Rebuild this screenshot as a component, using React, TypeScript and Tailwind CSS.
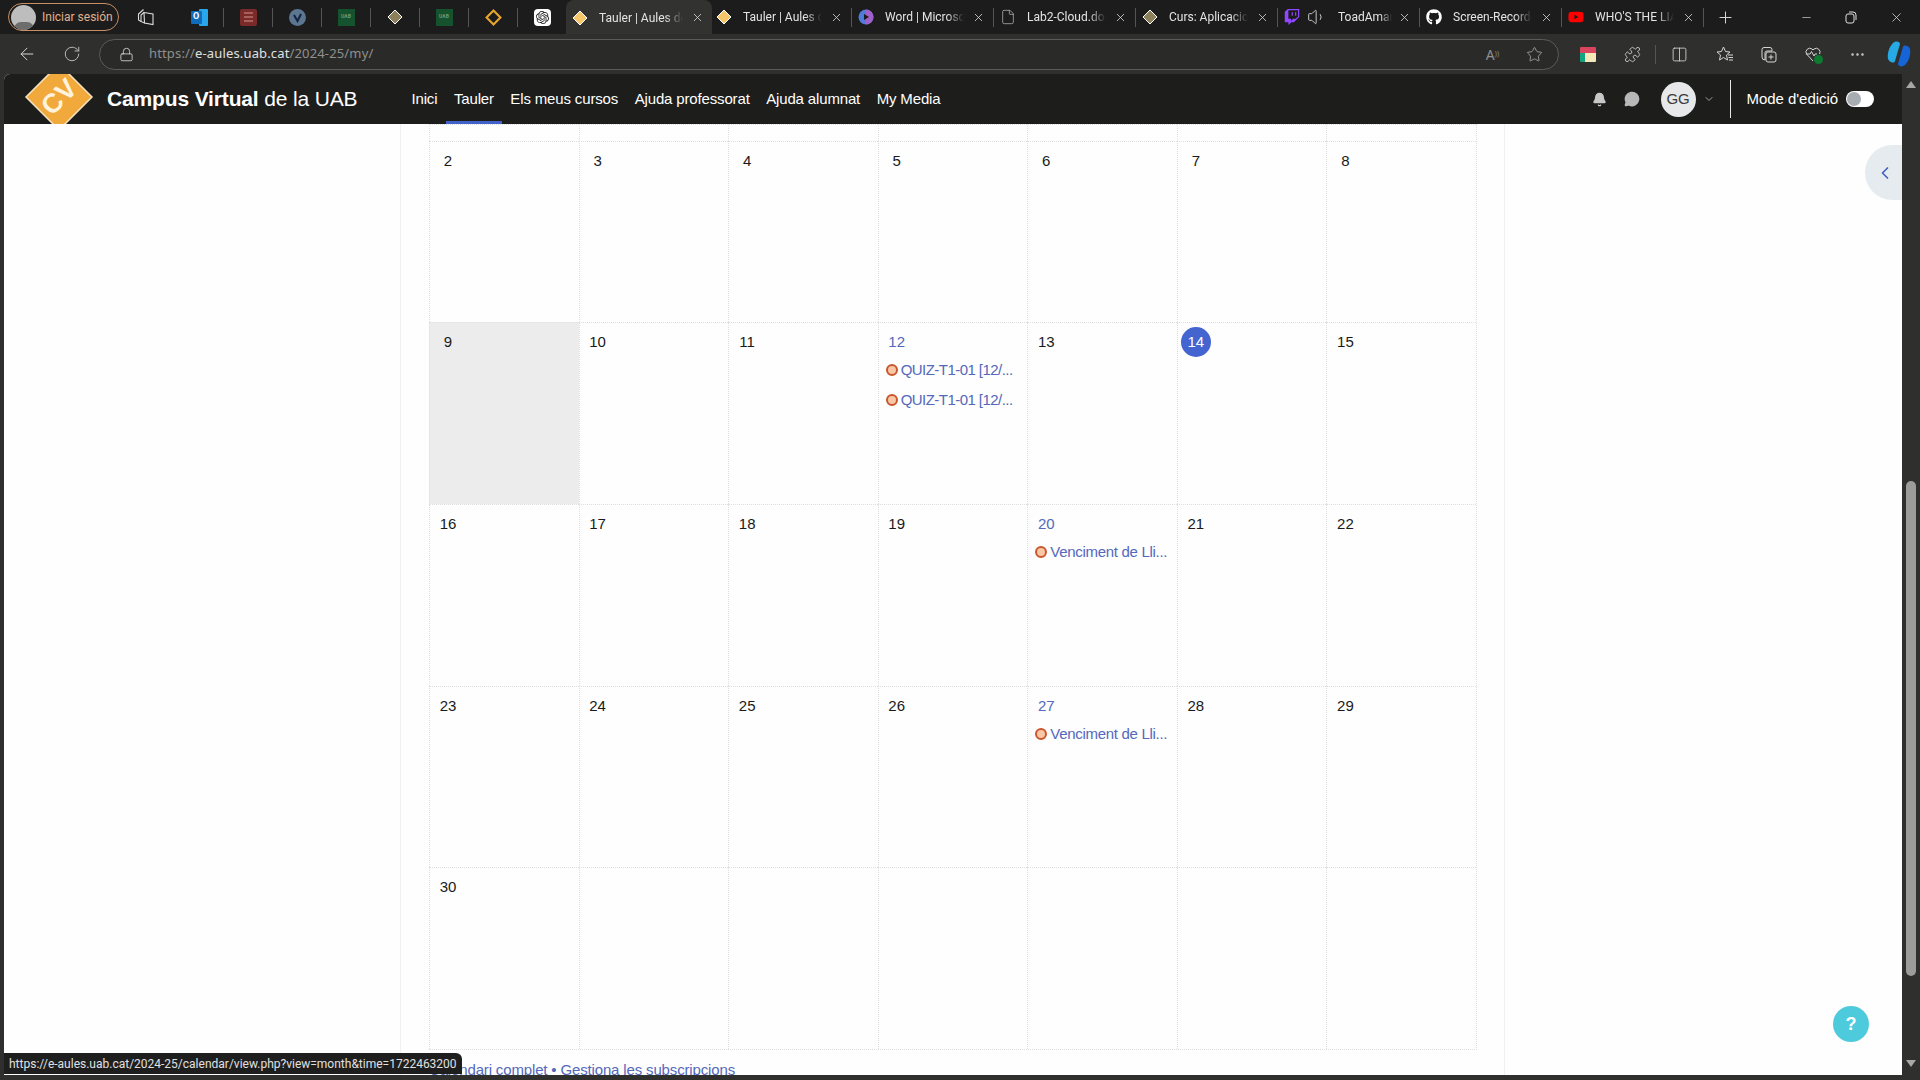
import type { ReactNode } from 'react'
import {
  ArrowLeft,
  Bell,
  ChevronDown,
  ChevronLeft,
  Columns2,
  File,
  Lock,
  MessageCircle,
  Minus,
  MoreHorizontal,
  Plus,
  Puzzle,
  RotateCw,
  Star,
  Volume1,
  X,
} from 'lucide-react'
import { FaGithub, FaTwitch, FaYoutube } from 'react-icons/fa'
import { SiOpenai } from 'react-icons/si'

const Diamond = ({ color = '#f5c76a', size = 16 }: { color?: string; size?: number }) => (
  <svg width={size} height={size} viewBox="0 0 16 16" className="shrink-0">
    <path d="M8 1 15 8 8 15 1 8Z" fill={color} stroke="#fff" strokeWidth="1" />
  </svg>
)

const UabIcon = () => (
  <div className="flex h-[17px] w-[17px] items-center justify-center bg-[#14532d] text-[5px] font-bold text-[#6b9a7c]">
    UAB
  </div>
)

const pinned: ReactNode[] = [
  <div key="outlook" className="flex h-[17px] w-[17px] items-center">
    <div className="z-10 flex h-[13px] w-[11px] items-center justify-center rounded-[1px] bg-[#0f6cbd] text-[9px] font-bold text-white">
      O
    </div>
    <div className="-ml-[3px] h-[17px] w-[9px] rounded-[1px] bg-[#28a8ea]" />
  </div>,
  <div key="todo" className="flex h-[17px] w-[17px] flex-col justify-center gap-[2px] rounded-[2px] bg-[#7a2a28] px-[4px]">
    <div className="h-[2px] bg-[#a8605c]" />
    <div className="h-[2px] bg-[#a8605c]" />
    <div className="h-[2px] bg-[#a8605c]" />
  </div>,
  <div key="check" className="flex h-[17px] w-[17px] items-center justify-center rounded-full bg-[#5c7590]">
    <svg width="11" height="11" viewBox="0 0 11 11">
      <path d="M2 3 5.5 9 9 2" fill="none" stroke="#12233f" strokeWidth="2" />
    </svg>
  </div>,
  <UabIcon key="uab1" />,
  <Diamond key="d1" color="#8c7f5c" />,
  <UabIcon key="uab2" />,
  <svg key="d2" width="17" height="17" viewBox="0 0 16 16">
    <path d="M8 1.5 14.5 8 8 14.5 1.5 8Z" fill="none" stroke="#e6a52e" strokeWidth="2" />
  </svg>,
  <div key="gpt" className="flex h-[17px] w-[17px] items-center justify-center rounded-[4px] bg-white">
    <SiOpenai className="h-[13px] w-[13px] text-[#222]" />
  </div>,
]

const BingIcon = () => (
  <svg width="16" height="18" viewBox="0 0 16 18" className="shrink-0">
    <circle cx="8" cy="9" r="7.5" fill="#4f7bd9" />
    <path d="M8 1.5a7.5 7.5 0 0 1 0 15Z" fill="#a05fc9" />
    <path d="M6 6l5 3-5 3Z" fill="#1b1c1b" />
  </svg>
)

type TabItem = {
  title: string
  icon: ReactNode
  box: string
  iconBox: string
  closeBox: string
  extra?: ReactNode
}

const tabs: TabItem[] = [
  { title: 'Tauler | Aules de', icon: <Diamond />, box: 'w-[146px] rounded-t-lg bg-[#323331]', iconBox: 'ml-[6px]', closeBox: 'ml-[8px]' },
  { title: 'Tauler | Aules de', icon: <Diamond />, box: 'w-[140px] border-r border-[#555]', iconBox: 'ml-[4px]', closeBox: 'ml-[8px]' },
  { title: 'Word | Microsoft', icon: <BingIcon />, box: 'w-[142px] border-r border-[#555]', iconBox: 'ml-[6px]', closeBox: 'ml-[8px]' },
  { title: 'Lab2-Cloud.docx', icon: <File className="h-4 w-4 text-[#c8c8c8]" strokeWidth={1} />, box: 'w-[142px] border-r border-[#555]', iconBox: 'ml-[6px]', closeBox: 'ml-[8px]' },
  { title: 'Curs: Aplicacions', icon: <Diamond color="#8c7f5c" />, box: 'w-[142px] border-r border-[#555]', iconBox: 'ml-[6px]', closeBox: 'ml-[8px]' },
  {
    title: 'ToadAman',
    icon: <FaTwitch className="h-4 w-4 text-[#9146ff]" />,
    box: 'w-[142px] border-r border-[#555]',
    iconBox: 'ml-[6px]',
    closeBox: 'ml-[6px]',
    extra: <Volume1 className="ml-[7px] h-[20px] w-[20px] shrink-0 text-[#d8d8d8]" strokeWidth={1.1} />,
  },
  { title: 'Screen-Recorder', icon: <FaGithub className="h-4 w-4 text-white" />, box: 'w-[142px] border-r border-[#555]', iconBox: 'ml-[6px]', closeBox: 'ml-[8px]' },
  { title: "WHO'S THE LIAR", icon: <FaYoutube className="h-4 w-4 text-[#f00]" />, box: 'w-[142px] border-r border-[#555]', iconBox: 'ml-[6px]', closeBox: 'ml-[8px]' },
]

const navItems = ['Inici', 'Tauler', 'Els meus cursos', 'Ajuda professorat', 'Ajuda alumnat', 'My Media']

type Event = { label: string; fit: string }
type Day = { n?: number; link?: boolean; today?: boolean; shaded?: boolean; events?: Event[] }

const quiz = { label: 'QUIZ-T1-01 [12/...', fit: 'tracking-[-0.55px]' }
const venc = { label: 'Venciment de Lli...', fit: 'tracking-[-0.3px]' }

const weeks: Day[][] = [
  [{}, {}, {}, {}, {}, {}, {}],
  [{ n: 2 }, { n: 3 }, { n: 4 }, { n: 5 }, { n: 6 }, { n: 7 }, { n: 8 }],
  [{ n: 9, shaded: true }, { n: 10 }, { n: 11 }, { n: 12, link: true, events: [quiz, quiz] }, { n: 13 }, { n: 14, today: true }, { n: 15 }],
  [{ n: 16 }, { n: 17 }, { n: 18 }, { n: 19 }, { n: 20, link: true, events: [venc] }, { n: 21 }, { n: 22 }],
  [{ n: 23 }, { n: 24 }, { n: 25 }, { n: 26 }, { n: 27, link: true, events: [venc] }, { n: 28 }, { n: 29 }],
  [{ n: 30 }, {}, {}, {}, {}, {}, {}],
]

const DayCell = ({ day }: { day: Day }) => (
  <div className={`border-t border-l border-dotted border-[#dde0e2] pl-[3px] pt-[4px] ${day.shaded ? 'bg-[#ebeceb]' : ''}`}>
    {day.n !== undefined && (
      <div
        className={`flex h-[30px] w-[30px] items-center justify-center rounded-full text-[15px] ${
          day.today ? 'bg-[#4464cf] text-white' : day.link ? 'text-[#5468bc]' : 'text-[#1a1a1a]'
        }`}
      >
        {day.n}
      </div>
    )}
    {day.events && (
      <div className="mt-[2px] flex flex-col gap-[8px]">
        {day.events.map((ev, i) => (
          <div key={i} className={`flex h-[22px] items-center whitespace-nowrap text-[15px] text-[#5468bc] ${ev.fit}`}>
            <span className="mr-[3px] ml-[4px] h-[12px] w-[12px] shrink-0 rounded-full border-2 border-[#c9562c] bg-[#f9c6a6]" />
            {ev.label}
          </div>
        ))}
      </div>
    )}
  </div>
)

const App = () => {
  return (
    <div className="relative flex h-[1080px] w-[1920px] flex-col overflow-hidden bg-[#2f302e] font-['Liberation_Sans',Arial,sans-serif]">
      {/* tab strip */}
      <div className="flex h-[34px] shrink-0 items-center bg-[#1b1c1b] font-['Roboto',sans-serif] text-[12px] text-[#e4e4e4]">
        <div className="ml-[8px] flex h-[28px] w-[111px] items-center rounded-full border border-[#c98f64] pl-[2px]">
          <div className="flex h-[25px] w-[25px] items-end justify-center overflow-hidden rounded-full bg-[#bdbdbd]">
            <div className="mb-[-6px] h-[14px] w-[20px] rounded-full bg-[#6d6d6d]" />
          </div>
          <span className="ml-[6px] text-[12px] text-[#e0b08e]">Iniciar sesión</span>
        </div>
        <div className="ml-[16px] flex w-[22px] items-center justify-center">
          <svg width="22" height="22" viewBox="0 0 22 22" fill="none" stroke="#dcdcdc" strokeWidth="1.1">
            <path d="M9 6.5 18 8v10.5L9.5 17Z" />
            <path d="M9 6.5 6 9v6.5l3.5 1.5" />
            <path d="M8.5 3.5 3.5 8v6l2.5 1.5" />
          </svg>
        </div>
        <div className="ml-[18px] flex">
          {pinned.map((icon, i) => (
            <div
              key={i}
              className={`flex h-[19px] w-[49px] items-center justify-center ${i < pinned.length - 1 ? 'border-r border-[#555]' : ''}`}
            >
              {icon}
            </div>
          ))}
        </div>
        <div className="ml-[-1px] flex h-[34px] items-center">
          {tabs.map((t) => (
            <div key={t.title + t.box} className={`flex items-center ${t.box === tabs[0].box ? 'h-[34px] pt-[1px]' : 'h-[19px]'} ${t.box}`}>
              <div className={`flex w-[16px] shrink-0 items-center justify-center ${t.iconBox}`}>{t.icon}</div>
              {t.extra}
              <div className="ml-[11px] min-w-0 flex-1 overflow-hidden whitespace-nowrap [mask-image:linear-gradient(to_right,black_78%,transparent)]">
                {t.title}
              </div>
              <X className={`mr-[8px] h-[13px] w-[13px] shrink-0 text-[#d8d8d8] ${t.closeBox}`} strokeWidth={1.5} />
            </div>
          ))}
        </div>
        <Plus className="ml-[12px] h-[19px] w-[19px] text-[#e0e0e0]" strokeWidth={1.2} />
        <Minus className="ml-[65px] h-[13px] w-[13px] text-[#e0e0e0]" strokeWidth={1.2} />
        <svg width="12" height="13" viewBox="0 0 12 13" fill="none" stroke="#e0e0e0" className="ml-[32px]">
          <rect x="1" y="3" width="8" height="9" rx="2" />
          <path d="M4 1h4a3 3 0 0 1 3 3v5" />
        </svg>
        <X className="ml-[32px] h-[15px] w-[15px] text-[#e0e0e0]" strokeWidth={1.2} />
      </div>

      {/* address bar row */}
      <div className="flex h-[40px] shrink-0 items-center text-[#d4d4d4]">
        <ArrowLeft className="ml-[17px] h-[20px] w-[20px]" strokeWidth={1.2} />
        <RotateCw className="ml-[26px] h-[18px] w-[18px] text-[#c4c4c4]" strokeWidth={1.2} />
        <div className="ml-[18px] flex h-[31px] w-[1460px] items-center rounded-full border border-[#5b5b5b] bg-[#2a2b29]">
          <Lock className="ml-[19px] h-[15px] w-[15px] text-[#dcdcdc]" strokeWidth={1.3} />
          <div className="ml-[15px] flex-1 font-['Noto_Sans',sans-serif] text-[13px] tracking-[0.15px] text-[#8f8f8f]">
            https://<span className="text-[#e0e0e0]">e-aules.uab.cat</span>/2024-25/my/
          </div>
          <span className="mr-[27px] font-['Noto_Sans',sans-serif] text-[14px] text-[#8f8f8f]">
            A<sup className="text-[7px]">))</sup>
          </span>
          <Star className="mr-[15px] h-[17px] w-[17px] text-[#a8a8a8]" strokeWidth={1.2} />
        </div>
        <div className="ml-[21px] flex h-[15px] w-[16px] flex-col overflow-hidden rounded-[1px]">
          <div className="h-[6px] bg-[#d9455f]" />
          <div className="flex flex-1">
            <div className="w-[5px] bg-[#14a37f]" />
            <div className="flex-1 bg-[#f4e7b8]" />
          </div>
        </div>
        <Puzzle className="ml-[28px] h-[17px] w-[17px]" strokeWidth={1.2} />
        <div className="ml-[14px] h-[19px] w-px bg-[#555]" />
        <Columns2 className="ml-[15px] h-[17px] w-[17px]" strokeWidth={1.2} />
        <svg width="18" height="18" viewBox="0 0 18 18" fill="none" stroke="#d4d4d4" className="ml-[28px]">
          <path d="M7.5 2 9.5 6.5 14 7 10.5 10 11.5 15 7.5 12.5 3.5 15 4.5 10 1 7 5.5 6.5Z" />
          <path d="M12 10h5M12.5 12.5h4.5M13 15h4" />
        </svg>
        <svg width="18" height="18" viewBox="0 0 18 18" fill="none" stroke="#d4d4d4" className="ml-[26px]">
          <path d="M4 2.5h6a2 2 0 0 1 2 2V6H7a2 2 0 0 0-2 2v7a3 3 0 0 1-3-3V4.5a2 2 0 0 1 2-2Z" />
          <rect x="6" y="7" width="10" height="10" rx="2" />
          <path d="M11 9.5v5M8.5 12h5" />
        </svg>
        <div className="relative ml-[26px] h-[18px] w-[18px]">
          <svg width="18" height="18" viewBox="0 0 18 18" fill="none" stroke="#d4d4d4">
            <path d="M9 16 2.5 9a3.8 3.8 0 0 1 5.5-5L9 5l1-1a3.8 3.8 0 0 1 5.5 5" />
            <path d="M2 9h4l1.5-2.5L10 11l1-2h2" />
          </svg>
          <span className="absolute right-[-1px] bottom-[-1px] h-[9px] w-[9px] rounded-full bg-[#0e7a2f]" />
        </div>
        <MoreHorizontal className="ml-[27px] h-[17px] w-[17px]" strokeWidth={1.5} />
        <svg width="24" height="28" viewBox="0 0 24 28" className="ml-[21px]">
          <path d="M6 3c3-2 6-2 7 1l-5 17c-1 3-6 1-7-2-1-5 1-12 5-16Z" fill="#27a9e6" />
          <path d="M18 25c-3 2-6 2-7-1l5-17c1-3 6-1 7 2 1 5-1 12-5 16Z" fill="#1565d8" />
        </svg>
      </div>

      {/* page */}
      <div className="flex h-[1001px] shrink-0">
        <div className="ml-[4px] flex w-[1898px] flex-col overflow-hidden rounded-tl-md bg-[#fdfefd]">
          <header className="flex h-[50px] shrink-0 items-center overflow-hidden bg-[#1d1e1c] text-white">
            <svg width="70" height="70" viewBox="0 0 70 70" className="mt-[-5px] ml-[20px] shrink-0">
              <path d="M35 2 68 35 35 68 2 35Z" fill="#f2a93b" stroke="#f7e3c0" strokeWidth="1.5" />
              <text x="35" y="44" textAnchor="middle" fontFamily="Liberation Sans" fontWeight="700" fontSize="27" fill="#fff3dd" transform="rotate(-45 35 35)">
                CV
              </text>
            </svg>
            <div className="ml-[13px] text-[21px] tracking-[-0.15px] whitespace-nowrap">
              <span className="font-bold">Campus Virtual</span> de la UAB
            </div>
            <nav className="ml-[54px] flex h-full items-center gap-[16.5px] text-[15px] tracking-[-0.15px]">
              {navItems.map((item) => (
                <div key={item} className="relative flex h-full items-center">
                  {item}
                  {item === 'Tauler' && <span className="absolute right-[-8px] bottom-0 left-[-8px] h-[3px] bg-[#4262c9]" />}
                </div>
              ))}
            </nav>
            <div className="ml-auto flex items-center">
              <Bell className="h-[15px] w-[15px] text-[#c8c8c8]" fill="#c8c8c8" />
              <MessageCircle className="ml-[17px] h-[16px] w-[16px] text-[#b8b8b8]" fill="#b8b8b8" />
              <div className="ml-[21px] flex h-[35px] w-[35px] items-center justify-center rounded-full bg-[#e6e8ea] text-[15px] text-[#3a3a3a]">
                GG
              </div>
              <ChevronDown className="ml-[7px] h-[12px] w-[12px] text-[#a0a0a0]" />
              <div className="ml-[15px] h-[38px] w-px bg-[#e8e8e8]" />
              <span className="ml-[16px] text-[15px] tracking-[-0.05px]">Mode d'edició</span>
              <div className="mr-[28px] ml-[8px] flex h-[16px] w-[28px] items-center rounded-full bg-white pl-[1px]">
                <div className="h-[14px] w-[14px] rounded-full bg-[#a8adb3]" />
              </div>
            </div>
          </header>
          <div className="ml-[396px] w-[1105px] flex-1 overflow-hidden border-x border-[#f0f1f0] px-[28px]">
            <div className="grid w-[1048px] grid-cols-7 grid-rows-[17px_181px_182px_182px_181px_182px] border-r border-b border-dotted border-[#dde0e2]">
              {weeks.flat().map((day, i) => (
                <DayCell key={i} day={day} />
              ))}
            </div>
            <div className="mt-[9px] text-[15px] tracking-[-0.15px] text-[#5468bc]">Calendari complet • Gestiona les subscripcions</div>
          </div>
        </div>
        {/* page scrollbar */}
        <div className="flex w-[18px] flex-col items-center justify-between bg-[#2f302e] pt-[7px] pb-[8px]">
          <div className="h-0 w-0 border-x-[5px] border-b-[7px] border-x-transparent border-b-[#a8a8a8]" />
          <div className="mt-[393px] mb-[84px] w-[10px] flex-1 rounded-full bg-[#9c9c9c]" />
          <div className="h-0 w-0 border-x-[5px] border-t-[7px] border-x-transparent border-t-[#a8a8a8]" />
        </div>
      </div>

      {/* overlays */}
      <div className="absolute top-[145px] left-[1865px] flex h-[55px] w-[37px] items-center justify-center rounded-l-full bg-[#e6ebef]">
        <ChevronLeft className="ml-[2px] h-[20px] w-[20px] text-[#4262c0]" strokeWidth={2} />
      </div>
      <div className="absolute top-[1006px] left-[1833px] flex h-[36px] w-[36px] items-center justify-center rounded-full bg-[#4dcadb] text-[18px] font-bold text-white">
        ?
      </div>
      <div className="absolute top-[1053px] left-[4px] flex h-[21px] w-[458px] items-center rounded-tr-md bg-[#1e1e1e] pl-[5px] font-['Roboto',sans-serif] text-[12px] whitespace-nowrap text-[#e0e0e0]">
        https://e-aules.uab.cat/2024-25/calendar/view.php?view=month&amp;time=1722463200
      </div>
    </div>
  )
}

export default App
